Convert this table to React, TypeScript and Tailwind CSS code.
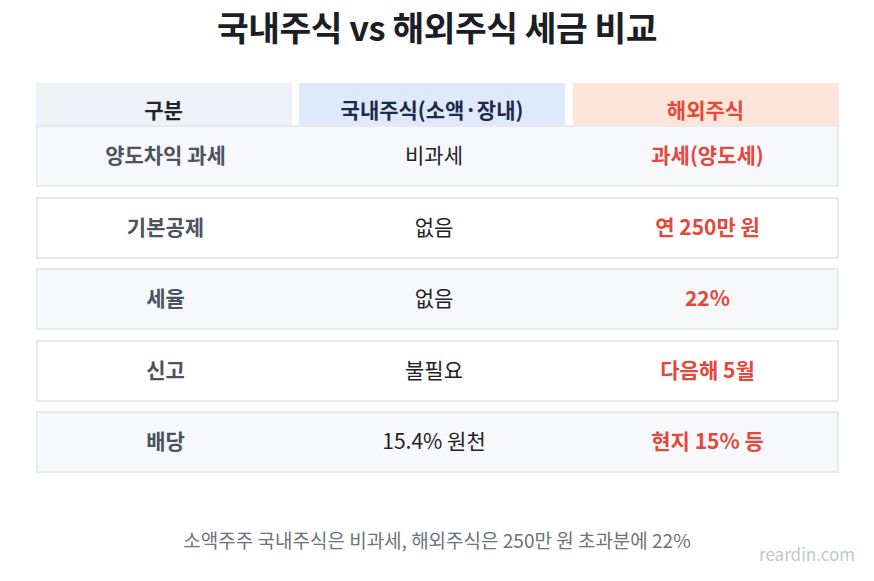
import React from 'react';

const font = { fontFamily: '"Noto Sans CJK KR", "Noto Sans", sans-serif' };

type Row = { label: string; domestic: string; overseas: string };

const rows: Row[] = [
  { label: '양도차익 과세', domestic: '비과세', overseas: '과세(양도세)' },
  { label: '기본공제', domestic: '없음', overseas: '연 250만 원' },
  { label: '세율', domestic: '없음', overseas: '22%' },
  { label: '신고', domestic: '불필요', overseas: '다음해 5월' },
  { label: '배당', domestic: '15.4% 원천', overseas: '현지 15% 등' },
];

export default function App() {
  return (
    <div
      className="w-[874px] h-[581px] bg-white flex flex-col items-center relative"
      style={font}
    >
      {/* Title */}
      <h1 className="mt-[4px] text-[34.5px] leading-[44px] font-bold text-[#1b1e25] tracking-[-0.5px]">
        국내주식 vs 해외주식 세금 비교
      </h1>

      {/* Table */}
      <div className="mt-[35px] w-[803px] flex flex-col">
        {/* Header */}
        <div className="grid grid-cols-[256px_266px_266px] gap-x-[7.5px] h-[42px]">
          <div className="bg-[#eef1f5] flex items-end justify-center pb-[1px] text-[21px] leading-[30px] font-bold text-[#1f2430]">
            구분
          </div>
          <div className="bg-[#dfe9fd] flex items-end justify-center pb-[1px] text-[21px] leading-[30px] font-bold text-[#1e2a4a]">
            국내주식(소액·장내)
          </div>
          <div className="bg-[#fee5d8] flex items-end justify-center pb-[1px] text-[21px] leading-[30px] font-bold text-[#e5483c]">
            해외주식
          </div>
        </div>

        {/* Rows */}
        <div className="flex flex-col gap-[9.5px]">
          {rows.map((r, i) => (
            <div
              key={r.label}
              className={
                'grid grid-cols-[256px_266px_266px] gap-x-[7.5px] h-[62px] border-2 border-[#e6e9ee] items-center ' +
                (i % 2 === 0 ? 'bg-[#f7f8fc]' : 'bg-white')
              }
            >
              <div className="text-center text-[21px] leading-[30px] font-bold text-[#4b5260] -mt-[4px]">{r.label}</div>
              <div className="text-center text-[21px] leading-[30px] text-[#1f2329] -mt-[4px]">{r.domestic}</div>
              <div className="text-center text-[21px] leading-[30px] font-bold text-[#e5473a] -mt-[4px]">{r.overseas}</div>
            </div>
          ))}
        </div>
      </div>

      {/* Footer */}
      <p className="mt-[54px] text-[19px] leading-[26px] text-[#6b7280]">
        소액주주 국내주식은 비과세, 해외주식은 250만 원 초과분에 22%
      </p>
      <span className="absolute right-[19px] bottom-[15px] text-[17px] leading-[24px] text-[#c3c7cd]">reardin.com</span>
    </div>
  );
}
